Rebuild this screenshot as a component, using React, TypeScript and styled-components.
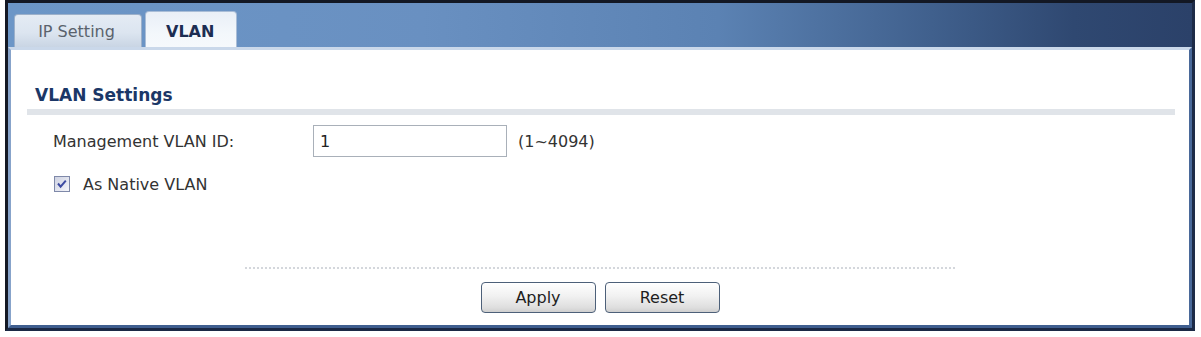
import styled, { createGlobalStyle } from 'styled-components';

const GlobalStyle = createGlobalStyle`
  html, body {
    margin: 0;
    padding: 0;
    background: #fff;
  }
  body {
    font-family: "DejaVu Sans", Verdana, sans-serif;
    font-size: 16px;
    color: #333;
  }
`;

const Frame = styled.div`
  box-sizing: border-box;
  width: 1190px;
  height: 331px;
  margin-left: 5px;
  border: 3px solid #131824;
  border-right-color: #1d2b47;
  border-bottom-color: #1b2945;
  display: flex;
  flex-direction: column;
`;

const TabBar = styled.div`
  flex: none;
  height: 44px;
  display: flex;
  align-items: flex-end;
  gap: 3px;
  padding-left: 6px;
  background: linear-gradient(
    to right,
    #6c96c7 0%,
    #6990c1 35%,
    #5b82b3 60%,
    #40608d 78%,
    #2f4871 90%,
    #2b4169 100%
  );
`;

const Tab = styled.div<{ $active?: boolean }>`
  box-sizing: border-box;
  height: ${(p) => (p.$active ? '36px' : '33px')};
  padding: ${(p) => (p.$active ? '3px 22px 0 20px' : '0 24px 0 21px')};
  min-width: ${(p) => (p.$active ? '90px' : '128px')};
  text-align: center;
  line-height: 33px;
  font-size: 16px;
  border: 1px solid ${(p) => (p.$active ? '#a9bdd7' : '#9cb0ca')};
  border-bottom: none;
  border-radius: 4px 4px 0 0;
  font-weight: ${(p) => (p.$active ? 'bold' : 'normal')};
  color: ${(p) => (p.$active ? '#1c2d52' : '#5a626c')};
  background: ${(p) =>
    p.$active
      ? 'linear-gradient(#e9eff7, #f3f7fb 60%, #f6f9fc)'
      : 'linear-gradient(#e4ebf4, #dce5f0 55%, #c9d5e4)'};
`;

const Panel = styled.div`
  flex: 1;
  display: flex;
  flex-direction: column;
  background: #fff;
  border-top: 3px solid #cad8ea;
  border-left: 3px solid #87a3ca;
  border-right: 3px solid #4a6999;
  border-bottom: 3px solid #3f5e8f;
`;

const SectionTitle = styled.h2`
  margin: 35px 0 0 24px;
  font-size: 17px;
  line-height: 20px;
  font-weight: bold;
  color: #1b3767;
`;

const SectionRule = styled.div`
  height: 6px;
  margin: 4px 14px 0 16px;
  background: #e0e4e9;
`;

const Form = styled.div`
  padding-left: 42px;
  display: flex;
  flex-direction: column;
`;

const FieldRow = styled.div`
  display: flex;
  align-items: center;
  margin-top: 10px;
  height: 32px;
`;

const Label = styled.span`
  width: 260px;
  color: #333;
`;

const TextInput = styled.input`
  box-sizing: border-box;
  width: 194px;
  height: 32px;
  padding: 0 6px;
  border: 1px solid #a9b0b9;
  font: 16px "DejaVu Sans", Verdana, sans-serif;
  color: #222;
  background: #fff;
  outline: none;
`;

const Hint = styled.span`
  margin-left: 11px;
  color: #333;
`;

const CheckRow = styled.label`
  display: flex;
  align-items: center;
  gap: 13px;
  margin-top: 19px;
  padding-left: 1px;
  height: 16px;
  color: #333;
`;

const Footer = styled.div`
  margin-top: auto;
  padding-bottom: 12px;
  display: flex;
  flex-direction: column;
  align-items: center;
`;

const Separator = styled.div`
  width: 710px;
  border-top: 2px dotted #d4d7dc;
`;

const ButtonRow = styled.div`
  display: flex;
  gap: 9px;
  margin-top: 13px;
`;

const Button = styled.button`
  box-sizing: border-box;
  width: 115px;
  height: 31px;
  padding: 0;
  border: 1px solid #4d6079;
  border-radius: 4px;
  background: linear-gradient(#ffffff, #f1f1f1 45%, #dedede 85%, #cfcfcf);
  box-shadow: inset 0 1px 0 #fff;
  font: 16px "DejaVu Sans", Verdana, sans-serif;
  color: #1e1e1e;
`;

const CheckBox = () => (
  <svg width="16" height="16" viewBox="0 0 16 16">
    <defs>
      <linearGradient id="cbfill" x1="0" y1="0" x2="1" y2="1">
        <stop offset="0" stopColor="#cdd1e1" />
        <stop offset="1" stopColor="#f6f7fb" />
      </linearGradient>
    </defs>
    <rect x="0.5" y="0.5" width="15" height="15" fill="url(#cbfill)" stroke="#7f89a9" />
    <path d="M4 7.5 L6.6 10.6 L11.8 4.6" fill="none" stroke="#3d4ba2" strokeWidth="2" />
  </svg>
);

export default function App() {
  return (
    <>
      <GlobalStyle />
      <Frame>
        <TabBar>
          <Tab>IP Setting</Tab>
          <Tab $active>VLAN</Tab>
        </TabBar>
        <Panel>
          <SectionTitle>VLAN Settings</SectionTitle>
          <SectionRule />
          <Form>
            <FieldRow>
              <Label>Management VLAN ID:</Label>
              <TextInput defaultValue="1" />
              <Hint>(1~4094)</Hint>
            </FieldRow>
            <CheckRow>
              <CheckBox />
              As Native VLAN
            </CheckRow>
          </Form>
          <Footer>
            <Separator />
            <ButtonRow>
              <Button>Apply</Button>
              <Button>Reset</Button>
            </ButtonRow>
          </Footer>
        </Panel>
      </Frame>
    </>
  );
}
